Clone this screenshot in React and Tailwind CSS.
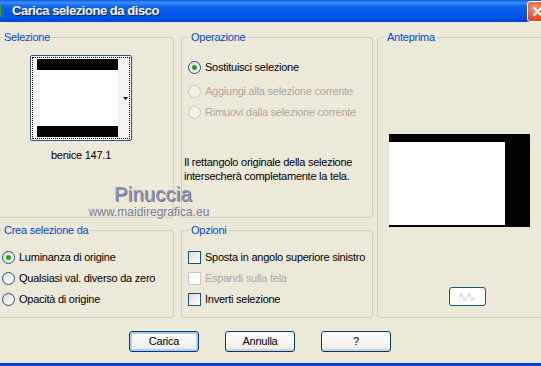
import React from "react";

const Radio = ({ checked, disabled }) => (
  <span
    className={`flex h-[13px] w-[13px] shrink-0 items-center justify-center rounded-full border ${
      disabled
        ? "border-[#CAC8BB] bg-[#F2F1E9]"
        : "border-[#1C5180] bg-gradient-to-br from-[#DCDCD7] to-white"
    }`}
  >
    {checked && <span className="h-[5px] w-[5px] rounded-full bg-[#21A121]" />}
  </span>
);

const Check = ({ disabled }) => (
  <span
    className={`h-[13px] w-[13px] shrink-0 border ${
      disabled
        ? "border-[#CAC8BB] bg-white"
        : "border-[#1C5180] bg-gradient-to-br from-[#DCDCD7] to-white"
    }`}
  />
);

const Group = ({ title, className, children }) => (
  <fieldset className={`rounded-[3px] border border-[#D0D0BF] ${className}`}>
    <legend className="ml-[7px] px-[2px] leading-[13px] text-[#0046D5]">{title}</legend>
    {children}
  </fieldset>
);

const Option = ({ control, label, disabled, className = "" }) => (
  <div className={`flex h-[13px] items-center gap-[4px] whitespace-nowrap ${className}`}>
    {control}
    <span className={disabled ? "text-[#ACA899]" : "text-black"}>{label}</span>
  </div>
);

const Button = ({ label, primary }) => (
  <button
    className={`h-[21px] w-[70px] rounded-[3px] border border-[#003C74] bg-gradient-to-b from-white to-[#ECEBE6] text-[11px] leading-none text-black ${
      primary
        ? "shadow-[inset_0_0_0_2px_#B2C9F6]"
        : "shadow-[inset_0_-2px_0_#D8D2C6]"
    }`}
  >
    {label}
  </button>
);

export default function App() {
  return (
    <div className="relative flex h-[366px] w-[541px] flex-col overflow-hidden bg-[#ECE9D8] font-['Liberation_Sans',Arial,sans-serif] text-[11px] tracking-[-0.25px]">
      {/* title bar */}
      <div className="flex h-[22px] shrink-0 items-center bg-[linear-gradient(#0A5DE8_0%,#3D8FFB_12%,#0B63EE_30%,#0058EA_60%,#0052E2_88%,#0043CC_100%)]">
        <svg width="16" height="16" viewBox="0 0 16 16" className="-ml-[10px] shrink-0">
          <rect x="2" y="2" width="3" height="12" fill="#E8B020" />
          <rect x="5" y="2" width="3" height="12" fill="#D43A2C" />
          <rect x="8" y="2" width="3" height="12" fill="#3AA03A" />
          <rect x="11" y="2" width="3" height="12" fill="#2A5CC8" />
        </svg>
        <span className="ml-[6px] text-[13px] font-bold tracking-[-0.45px] text-white [text-shadow:1px_1px_0_#0A1E6E]">
          Carica selezione da disco
        </span>
        <div className="-mr-[7px] ml-auto flex h-[21px] w-[21px] items-center justify-center rounded-[3px] border border-white bg-[radial-gradient(circle_at_35%_30%,#F29A78,#E0522A_60%,#C23A14)]">
          <svg width="11" height="11" viewBox="0 0 11 11">
            <path d="M1.5 1.5 L9.5 9.5 M9.5 1.5 L1.5 9.5" stroke="white" strokeWidth="2" />
          </svg>
        </div>
      </div>

      {/* panels */}
      <div className="mt-[9px] -ml-[6px] flex gap-[4px]">
        <div className="grid grid-cols-[180px_192px] grid-rows-[187px_94px] gap-x-[7px] gap-y-[6px]">
          <Group title="Selezione">
            <div className="ml-[35px] mt-[11px] flex w-[102px] flex-col items-center">
              <div className="h-[86px] w-[102px] rounded-[2px] border border-[#2B5482] bg-white p-[1px]">
                <div className="flex h-full w-full border border-dotted border-black bg-white">
                  <div className="flex flex-1 flex-col justify-between pl-[4px] pt-[1px] pb-[1px]">
                    <div className="h-[11px] bg-black" />
                    <div className="h-[11px] bg-black" />
                  </div>
                  <div className="flex w-[11px] items-center justify-end bg-[#F3F3F3] pr-[1px]">
                    <svg width="5" height="3" viewBox="0 0 5 3">
                      <path d="M0 0 H5 L2.5 3 Z" fill="black" />
                    </svg>
                  </div>
                </div>
              </div>
              <span className="mt-[8px] leading-[13px]">benice 147.1</span>
            </div>
          </Group>

          <Group title="Operazione">
            <div className="flex flex-col pl-[6px]">
              <Option className="mt-[17px]" control={<Radio checked />} label="Sostituisci selezione" />
              <Option className="mt-[11px]" control={<Radio disabled />} label="Aggiungi alla selezione corrente" disabled />
              <Option className="mt-[8px]" control={<Radio disabled />} label="Rimuovi dalla selezione corrente" disabled />
              <p className="-ml-[4px] mt-[36px] leading-[14px]">
                Il rettangolo originale della selezione
                <br />
                intersecherà completamente la tela.
              </p>
            </div>
          </Group>

          <Group title="Crea selezione da">
            <div className="flex flex-col gap-[8px] pl-[7px] pt-[14px]">
              <Option control={<Radio checked />} label="Luminanza di origine" />
              <Option control={<Radio />} label="Qualsiasi val. diverso da zero" />
              <Option control={<Radio />} label="Opacità di origine" />
            </div>
          </Group>

          <Group title="Opzioni">
            <div className="flex flex-col gap-[8px] pl-[6px] pt-[14px]">
              <Option control={<Check />} label="Sposta in angolo superiore sinistro" />
              <Option control={<Check disabled />} label="Espandi sulla tela" disabled />
              <Option control={<Check />} label="Inverti selezione" />
            </div>
          </Group>
        </div>

        <Group title="Anteprima" className="h-[287px] w-[181px] shrink-0">
          <div className="ml-[11px] mt-[90px] flex h-[93px] w-[141px] flex-col bg-black pt-[8px] pb-[2px] pr-[25px]">
            <div className="flex-1 bg-white" />
          </div>
          <button className="ml-[71px] mt-[60px] flex h-[19px] w-[37px] items-center justify-center rounded-[3px] border border-[#1C5180] bg-white">
            <svg width="22" height="10" viewBox="0 0 22 10">
              <g fill="#E4E4E4">
                <rect x="2" y="1" width="4" height="4" />
                <rect x="10" y="1" width="4" height="4" />
                <rect x="6" y="5" width="4" height="4" />
                <rect x="14" y="5" width="4" height="4" />
              </g>
            </svg>
          </button>
        </Group>
      </div>

      {/* buttons */}
      <div className="mt-[13px] flex gap-[26px] pl-[129px]">
        <Button label="Carica" primary />
        <Button label="Annulla" />
        <Button label="?" />
      </div>

      <div className="mt-auto h-[3px] bg-[#0842D8]" />

      {/* watermark */}
      <div className="pointer-events-none absolute left-[88px] top-[184px] flex w-[122px] flex-col items-center tracking-normal">
        <span className="pl-[8px] text-[20px] leading-[20px] tracking-[0.3px] text-[#9193AE] [text-shadow:1px_1px_0_#6F7190]">
          Pinuccia
        </span>
        <span className="mt-[2px] text-[12px] leading-[13px] text-[#7B7D95]">www.maidiregrafica.eu</span>
      </div>
    </div>
  );
}
